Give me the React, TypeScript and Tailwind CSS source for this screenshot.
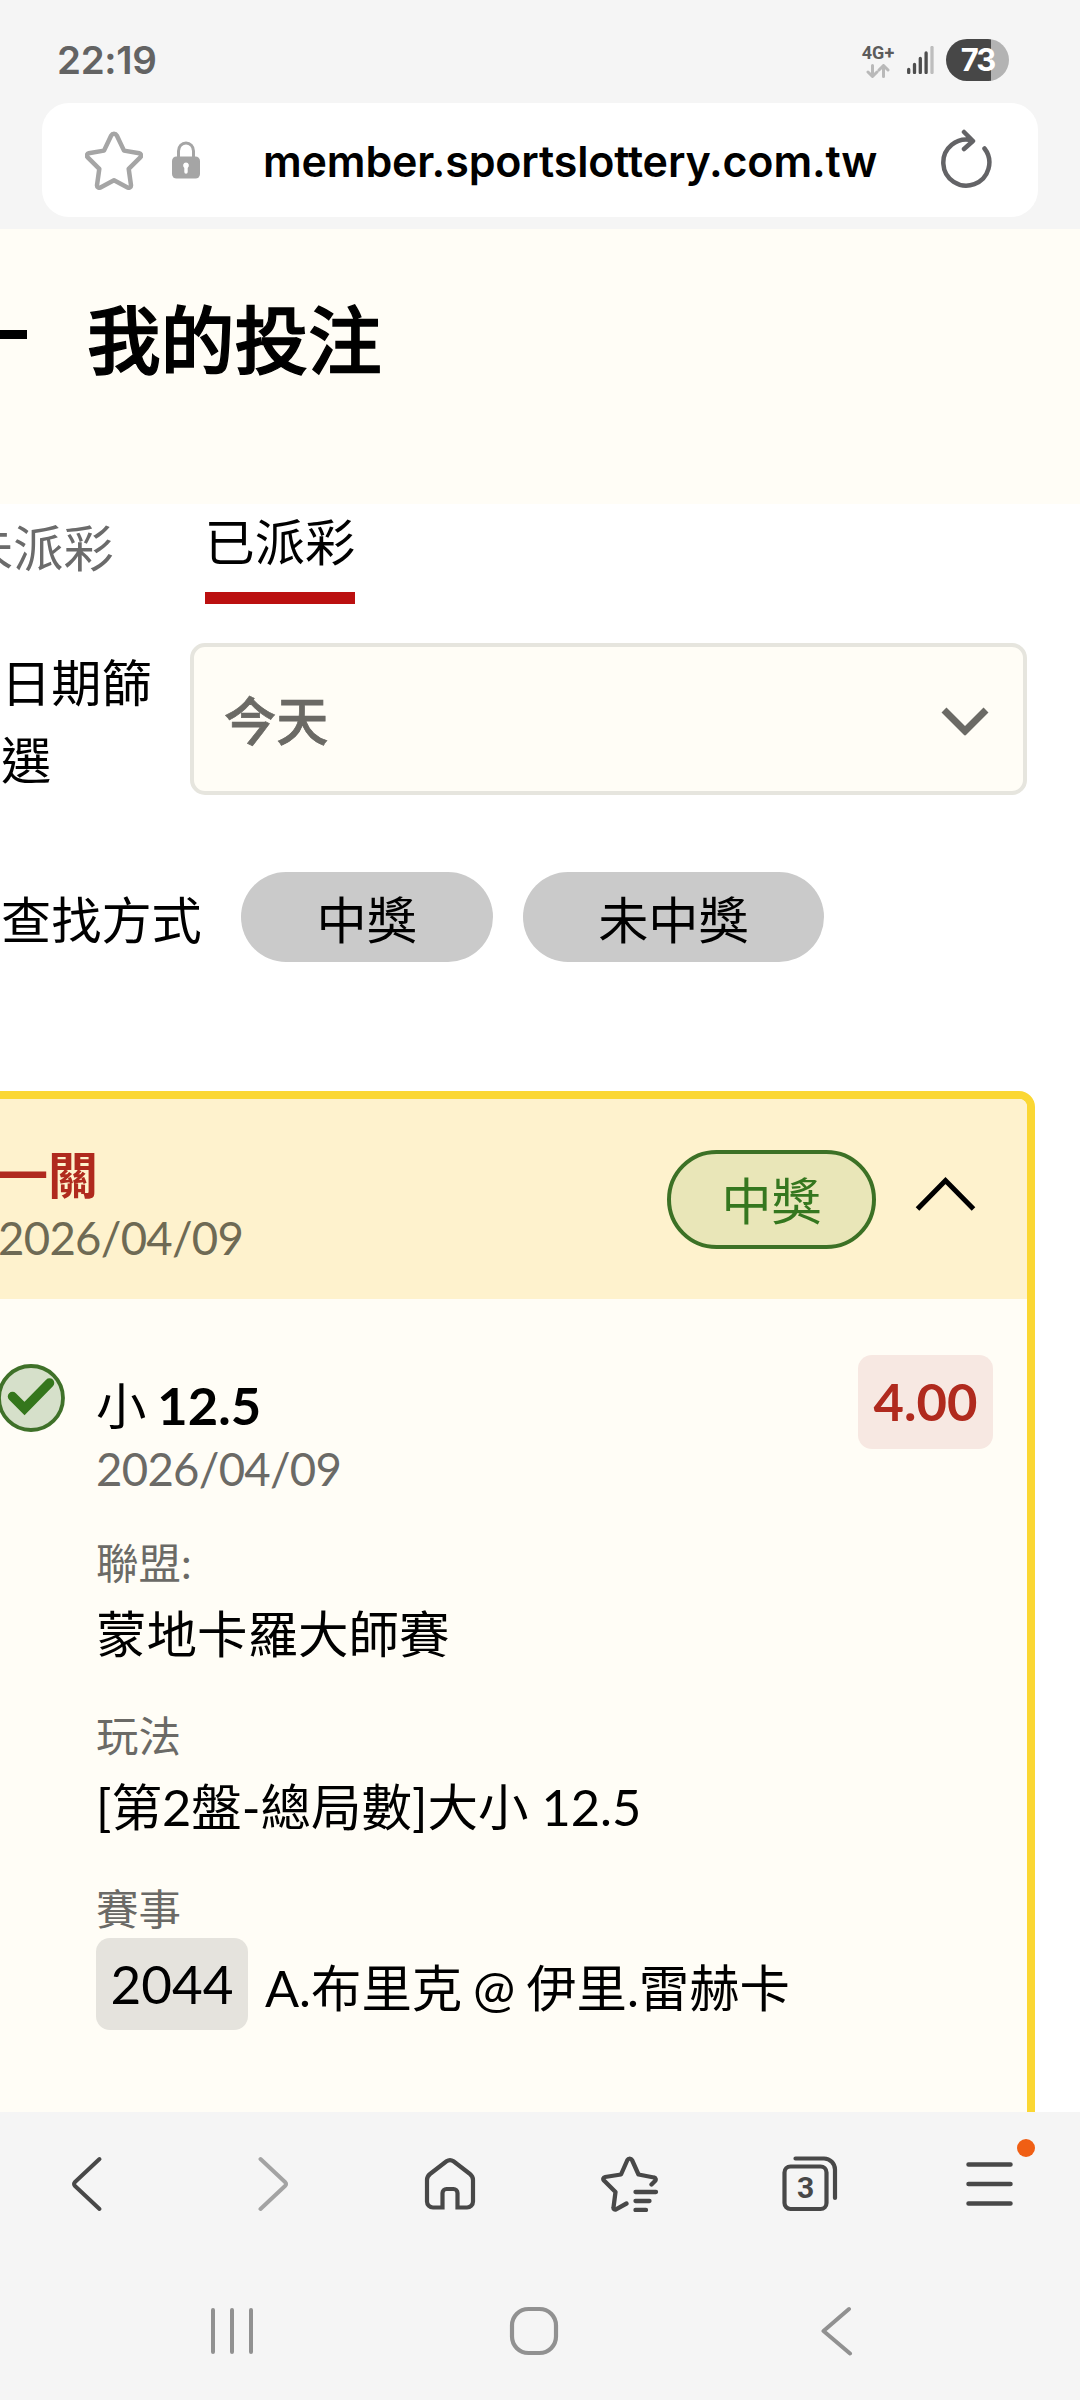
import type { ReactNode } from 'react';

const BET = {
  title: '一關',
  date: '2026/04/09',
  result: '中獎',
  pick: '小',
  line: '12.5',
  odds: '4.00',
  code: '2044',
  match: 'A.布里克 @ 伊里.雷赫卡',
};

const DETAILS = [
  { label: '聯盟:', value: '蒙地卡羅大師賽' },
  { label: '玩法', value: '[第2盤-總局數]大小 12.5' },
];

const FILTERS = ['中獎', '未中獎'];

function StatusBar() {
  return (
    <div className="flex h-[103px] items-start justify-between pl-[57px] pr-[71px] pt-[39px] font-[Inter,sans-serif]">
      <span className="text-[38.5px] font-semibold leading-[42px] tracking-[-0.3px] text-[#636363]">22:19</span>
      <div className="flex items-start">
        <div className="mr-[12px] mt-[6px] flex w-[34px] flex-col items-center">
          <span className="font-[Roboto,sans-serif] text-[18px] font-bold leading-[16px] text-[#5c5c5c]">4G+</span>
          <svg className="mt-[3px]" width="24" height="14" viewBox="0 0 24 14" fill="none" stroke="#b9b9b9" strokeWidth="3" strokeLinecap="round" strokeLinejoin="round">
            <path d="M6.500 1.500V12M2 8l4.500 4.500L11 8M17.500 12.500V2M13 6l4.500-4.500L22 6" />
          </svg>
        </div>
        <svg className="mr-[12px] mt-[7px]" width="27" height="28" viewBox="0 0 27 28" strokeWidth="3.300" strokeLinecap="round">
          <path d="M1.700 23.500v3M7.500 18.500v8M13.300 12.500v14M19.100 7v19.500" stroke="#4e4e4e" />
          <path d="M25 1.500v25" stroke="#bdbdbd" />
        </svg>
        <div className="flex h-[42px] w-[63px] items-center justify-center rounded-full bg-[linear-gradient(to_right,#474747_45.5px,#b3b3b3_45.5px)] text-[31px] font-bold tracking-[-2px] text-white">
          73
        </div>
      </div>
    </div>
  );
}

function AddressBar() {
  return (
    <div className="mx-[42px] flex h-[114px] items-center rounded-[27px] bg-white pl-[43px]">
      <svg width="58" height="60" viewBox="0 0 58 60" fill="none" stroke="#a5a5a5" strokeWidth="4.500" strokeLinejoin="round">
        <path d="M26.200 5.500a3.200 3.200 0 0 1 5.600 0l7.200 15.100 15.300 2.700a2.300 2.300 0 0 1 1 4L43.700 38.900l2.300 16.300a2.400 2.400 0 0 1-3.500 2.300L29 50.200l-13.500 7.300a2.400 2.400 0 0 1-3.500-2.300l2.300-16.300L2.700 27.300a2.300 2.300 0 0 1 1-4L19 20.600z" />
      </svg>
      <svg className="ml-[29px]" width="28" height="38" viewBox="0 0 28 38">
        <path d="M6.500 17V10a7.500 8 0 0 1 15 0v7" fill="none" stroke="#a5a5a5" strokeWidth="3" />
        <rect x="0" y="15.500" width="28" height="22" rx="4.500" fill="#a5a5a5" />
        <path d="M14 21.500a3 3 0 0 1 1.700 5.400V31a1.700 1.700 0 0 1-3.400 0v-4.100A3 3 0 0 1 14 21.500z" fill="#fff" />
      </svg>
      <span className="ml-[63px] w-[640px] whitespace-nowrap pt-[2px] font-[Inter,sans-serif] text-[43px] font-semibold leading-[60px] tracking-[-0.15px] text-black">
        member.sportslottery.com.tw
      </span>
      <svg className="mb-[5px] ml-[36px]" width="54" height="60" viewBox="0 0 54 60" fill="none" stroke="#636366" strokeWidth="4.500" strokeLinecap="round" strokeLinejoin="round">
        <path d="M45.500 20.500A23 23 0 1 1 33 12.300M25 4l9 9-9 8" />
      </svg>
    </div>
  );
}

function BrowserToolbar() {
  return (
    <div className="flex h-[117px] items-center pt-[27px] text-[#484848]">
      <svg className="ml-[71px]" width="32" height="56" viewBox="0 0 32 56" fill="none" stroke="currentColor" strokeWidth="4" strokeLinecap="round" strokeLinejoin="round">
        <path d="M28.500 3 4 26q-2 2 0 4l24.500 23" />
      </svg>
      <svg className="ml-[154px]" width="32" height="56" viewBox="0 0 32 56" fill="none" stroke="#a3a3a3" strokeWidth="4" strokeLinecap="round" strokeLinejoin="round">
        <path d="M3.500 3 28 26q2 2 0 4L3.500 53" />
      </svg>
      <svg className="ml-[135px]" width="52" height="56" viewBox="0 0 52 56" fill="none" stroke="currentColor" strokeWidth="4.200">
        <path d="M18.500 51.500H9a6 6 0 0 1-6-6V24q0-3.600 3-6L22.500 5.300q3.500-2.500 7 0L46 18q3 2.400 3 6v21.500a6 6 0 0 1-6 6h-9.500V37a4 4 0 0 0-4-4h-7a4 4 0 0 0-4 4z" />
      </svg>
      <svg className="ml-[125px]" width="58" height="56" viewBox="0 0 58 56" fill="none" stroke="currentColor" strokeWidth="4.300" strokeLinecap="round" strokeLinejoin="round">
        <path d="M50.500 28.500 54 25a2 2 0 0 0-1-3.500L37.500 18.500 31 4a2.600 2.600 0 0 0-4.600 0L20 18.500 4 21a2 2 0 0 0-1 3.500L14.500 36l-2 15.500a1.700 1.700 0 0 0 2.500 1.800L25.500 47.500" />
        <path d="M34.500 36H55M34.500 45H48.500M34.500 54H45" />
      </svg>
      <div className="relative ml-[123px] h-[56px] w-[56px]">
        <svg width="56" height="56" viewBox="0 0 56 56" fill="none" stroke="currentColor" strokeWidth="4.200" strokeLinecap="round">
          <rect x="2.500" y="10.500" width="42" height="42.500" rx="6" />
          <path d="M13.500 2.500H42a11 11 0 0 1 11 11V42" />
        </svg>
        <span className="absolute left-0 top-[18px] w-[47px] text-center font-[Roboto,sans-serif] text-[30px] font-bold leading-[28px]">
          3
        </span>
      </div>
      <div className="relative ml-[128px] h-[56px] w-[48px]">
        <svg width="48" height="56" viewBox="0 0 48 56" stroke="currentColor" strokeWidth="4.500" strokeLinecap="round">
          <path d="M2.500 8.500h42M2.500 28h42M2.500 47.500h42" />
        </svg>
        <span className="absolute -top-[17px] left-[51px] h-[18px] w-[18px] rounded-full bg-[#f05f14]" />
      </div>
    </div>
  );
}

function SystemNav() {
  return (
    <div className="flex h-[171px] items-start pt-[77px]">
      <svg className="ml-[210px]" width="46" height="50" viewBox="0 0 46 50" stroke="#919191" strokeWidth="4" strokeLinecap="round">
        <path d="M3 4v42M22 4v42M41 4v42" />
      </svg>
      <svg className="ml-[253px]" width="50" height="50" viewBox="0 0 50 50" fill="none" stroke="#919191" strokeWidth="4.200">
        <rect x="3" y="3" width="44" height="44" rx="16.500" />
      </svg>
      <svg className="ml-[261px]" width="34" height="50" viewBox="0 0 34 50" fill="none" stroke="#919191" strokeWidth="4" strokeLinecap="round" strokeLinejoin="round">
        <path d="M29 3 3.500 25 30 47.500" />
      </svg>
    </div>
  );
}

function Detail({ label, children }: { label: string; children: ReactNode }) {
  return (
    <div className="mb-[31px]">
      <div className="text-[42.5px] leading-[64px] text-[#6b6a66]">{label}</div>
      {children}
    </div>
  );
}

function BetCard() {
  return (
    <section className="-ml-[20px] mr-[45px] mt-[129px] h-[1100px] overflow-hidden rounded-tr-[16px] border-8 border-[#fbd733] bg-[#fffdf6]">
      <header className="flex h-[200px] items-start bg-[#fef2cd] pl-[10px]">
        <div className="flex-1 pt-[45px]">
          <h2 className="text-[50px] font-bold leading-[62px] text-[#b02a1e]">{BET.title}</h2>
          <p className="text-[45.5px] leading-[63px] tracking-[-0.7px] text-[#6e6a54]">{BET.date}</p>
        </div>
        <span className="mt-[51px] h-[99px] w-[209px] rounded-full border-4 border-[#3c7125] bg-[#e9e6b8] text-center text-[50px] leading-[95px] text-[#35771f]">
          {BET.result}
        </span>
        <svg className="ml-[39px] mr-[51px] mt-[76px]" width="61" height="38" viewBox="0 0 61 38" fill="none" stroke="#000" strokeWidth="5">
          <path d="M2.500 34 30.500 5.500 58.500 34" />
        </svg>
      </header>

      <div className="flex items-start pt-[55px]">
        <svg className="ml-[9px] mt-[8px]" width="68" height="70" viewBox="0 0 68 70">
          <circle cx="34" cy="36" r="32" fill="#d6e0ca" stroke="#3f7129" strokeWidth="3.800" />
          <path d="M15.500 34.500 27.500 46.500 52.500 21" fill="none" stroke="#34761c" strokeWidth="9.500" strokeLinecap="round" />
        </svg>
        <div className="ml-[31px] flex-1 pt-[20px]">
          <div className="text-[50.4px] leading-[62px] [word-spacing:-2px]">
            {BET.pick} <b className="text-[52.5px]">{BET.line}</b>
          </div>
          <div className="mb-[31px] text-[45.5px] leading-[63px] tracking-[-0.7px] text-[#6b6a66]">{BET.date}</div>
          {DETAILS.map((item) => (
            <Detail key={item.label} label={item.label}>
              <div className="text-[50.5px] leading-[78px]">{item.value}</div>
            </Detail>
          ))}
          <Detail label="賽事">
            <div className="-mt-[3px] flex items-start">
              <span className="h-[92px] w-[152px] rounded-[14px] bg-[#e5e3dd] text-center text-[53px] leading-[92px]">{BET.code}</span>
              <span className="ml-[17px] whitespace-nowrap text-[50.4px] leading-[100px] [word-spacing:-2px]">{BET.match}</span>
            </div>
          </Detail>
        </div>
        <span className="mr-[34px] mt-px h-[94px] w-[135px] rounded-[14px] bg-[#f7e8e2] text-center text-[52.5px] font-bold leading-[92px] text-[#b02a1e]">
          {BET.odds}
        </span>
      </div>
    </section>
  );
}

export default function App() {
  return (
    <div className="flex h-[2400px] w-[1080px] flex-col overflow-hidden bg-white font-[Lato,'Noto_Sans_CJK_TC',sans-serif] text-black">
      <div className="h-[229px] shrink-0 bg-[#f5f5f5]">
        <StatusBar />
        <AddressBar />
      </div>

      <main className="h-[1883px] shrink-0 overflow-hidden">
        <div className="flex h-[275px] items-start bg-[#fffdf6] pt-[74px]">
          {/* shaft of the back arrow, its head is scrolled out of view */}
          <span className="mt-[27px] h-[9px] w-[27px] bg-black" />
          <h1 className="ml-[60px] text-[73.7px] font-medium leading-[74px] [-webkit-text-stroke:1.4px_#000]">我的投注</h1>
        </div>

        <nav className="-ml-[37px] flex h-[100px] items-start text-[50.2px]">
          <span className="leading-[88px] text-[#6b6b6b]">未派彩</span>
          <span className="ml-[91px] h-[100px] border-b-[12px] border-[#bb1010] leading-[76px]">已派彩</span>
        </nav>

        <div className="mt-[39px] flex h-[152px] items-start pl-px">
          <label className="w-[189px] pr-4 pt-px text-[50.2px] leading-[77px]">日期篩選</label>
          <div className="flex h-full w-[837px] items-center justify-between rounded-[15px] border-4 border-[#e6e5de] bg-[#fffdf6] pl-[30px] pr-[33px]">
            <span className="pt-[5px] text-[52.2px] font-medium text-[#6b6a65] [-webkit-text-stroke:0.7px_#6b6a65]">今天</span>
            <svg className="mt-[3px]" width="50" height="30" viewBox="0 0 50 30" stroke="#6b6a65" strokeWidth="7">
              <path d="M4 4 27 27M46 4 23 27" />
            </svg>
          </div>
        </div>

        <div className="mt-[77px] flex h-[90px] items-start pl-px text-[50.2px] leading-[96px]">
          <span className="w-[240px]">查找方式</span>
          <div className="flex gap-[30px]">
            {FILTERS.map((name) => (
              <button key={name} type="button" className="h-[90px] rounded-full bg-[#cacaca] px-[75.6px] leading-[96px]">
                {name}
              </button>
            ))}
          </div>
        </div>

        <BetCard />
      </main>

      <div className="h-[288px] shrink-0 bg-[#f5f5f5]">
        <BrowserToolbar />
        <SystemNav />
      </div>
    </div>
  );
}
